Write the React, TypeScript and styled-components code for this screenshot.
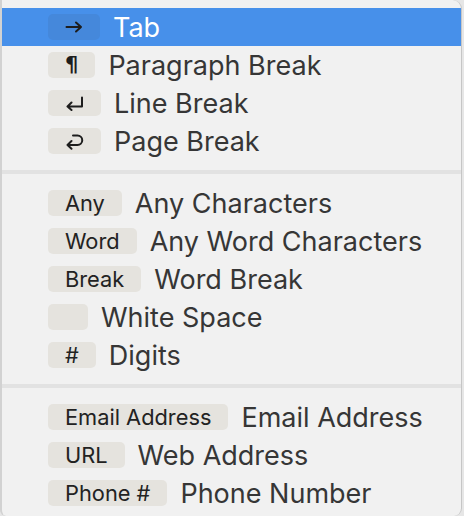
import styled, { createGlobalStyle } from "styled-components";

const GlobalStyle = createGlobalStyle`
  html, body {
    margin: 0;
    padding: 0;
  }
  body {
    background: #e6e6e6;
    font-family: Inter, "Liberation Sans", sans-serif;
  }
`;

type Item = { key: string; glyph?: "tab" | "para" | "line" | "page"; label: string };

const groups: Item[][] = [
  [
    { key: "", glyph: "tab", label: "Tab" },
    { key: "", glyph: "para", label: "Paragraph Break" },
    { key: "", glyph: "line", label: "Line Break" },
    { key: "", glyph: "page", label: "Page Break" },
  ],
  [
    { key: "Any", label: "Any Characters" },
    { key: "Word", label: "Any Word Characters" },
    { key: "Break", label: "Word Break" },
    { key: "", label: "White Space" },
    { key: "#", label: "Digits" },
  ],
  [
    { key: "Email Address", label: "Email Address" },
    { key: "URL", label: "Web Address" },
    { key: "Phone #", label: "Phone Number" },
  ],
];

const Glyph = ({ kind }: { kind: Item["glyph"] }) => {
  if (kind === "para") return <Pilcrow>¶</Pilcrow>;
  const common = {
    fill: "none",
    stroke: "#1d1d1d",
    strokeWidth: 2,
    strokeLinecap: "round" as const,
    strokeLinejoin: "round" as const,
  };
  if (kind === "tab")
    return (
      <svg width="18" height="14" viewBox="0 0 18 14">
        <path d="M1.5 7H16M11 2.5L16 7L11 11.5" {...common} />
      </svg>
    );
  if (kind === "line")
    return (
      <svg width="19" height="15" viewBox="0 0 19 15">
        <path d="M17 1.5V10.5H2.5M6.5 6.5L2.5 10.5L6.5 14" {...common} />
      </svg>
    );
  return (
    <svg width="19" height="17" viewBox="0 0 19 17">
      <path d="M8 2.5H12.5A4.7 4.7 0 0 1 12.5 12H2.5M6.5 8L2.5 12L6.5 15.8" {...common} />
    </svg>
  );
};

export default function App() {
  return (
    <>
      <GlobalStyle />
      <Menu>
        {groups.map((group, gi) => (
          <Group key={gi}>
            {gi > 0 && <Separator />}
            {group.map((item, i) => {
              const active = gi === 0 && i === 0;
              return (
                <Row key={item.label} $active={active}>
                  <Key $active={active}>
                    {item.glyph ? <Glyph kind={item.glyph} /> : item.key}
                  </Key>
                  <Label>{item.label}</Label>
                </Row>
              );
            })}
          </Group>
        ))}
      </Menu>
    </>
  );
}

const Menu = styled.div`
  box-sizing: border-box;
  width: 462px;
  height: 516px;
  padding: 8px 0 4px;
  background: #f1f1f1;
  border-left: 2px solid #d2d2d2;
  border-right: 1px solid #c6c6c6;
  border-radius: 0 9px 8px 6px;
  overflow: hidden;
`;

const Group = styled.div`
  display: flex;
  flex-direction: column;
`;

const Separator = styled.div`
  height: 4px;
  margin: 10px 0;
  background: #e2e2e2;
`;

const Row = styled.div<{ $active?: boolean }>`
  display: flex;
  align-items: center;
  gap: 13px;
  height: 38px;
  padding-left: 46px;
  font-size: 27px;
  color: ${(p) => (p.$active ? "#ffffff" : "#363636")};
  background: ${(p) => (p.$active ? "#4790ea" : "transparent")};
`;

const Key = styled.span<{ $active?: boolean }>`
  display: inline-flex;
  align-items: center;
  justify-content: center;
  box-sizing: border-box;
  height: 26px;
  min-width: 40px;
  padding: 0 17px;
  border-radius: 5px;
  font-size: 21.8px;
  line-height: 26px;
  color: #222222;
  background: ${(p) => (p.$active ? "#4588db" : "#e5e3de")};
`;

const Pilcrow = styled.span`
  font-family: "DejaVu Sans", sans-serif;
  font-weight: 700;
  font-size: 21px;
  color: #1d1d1d;
`;

const Label = styled.span`
  white-space: nowrap;
`;
